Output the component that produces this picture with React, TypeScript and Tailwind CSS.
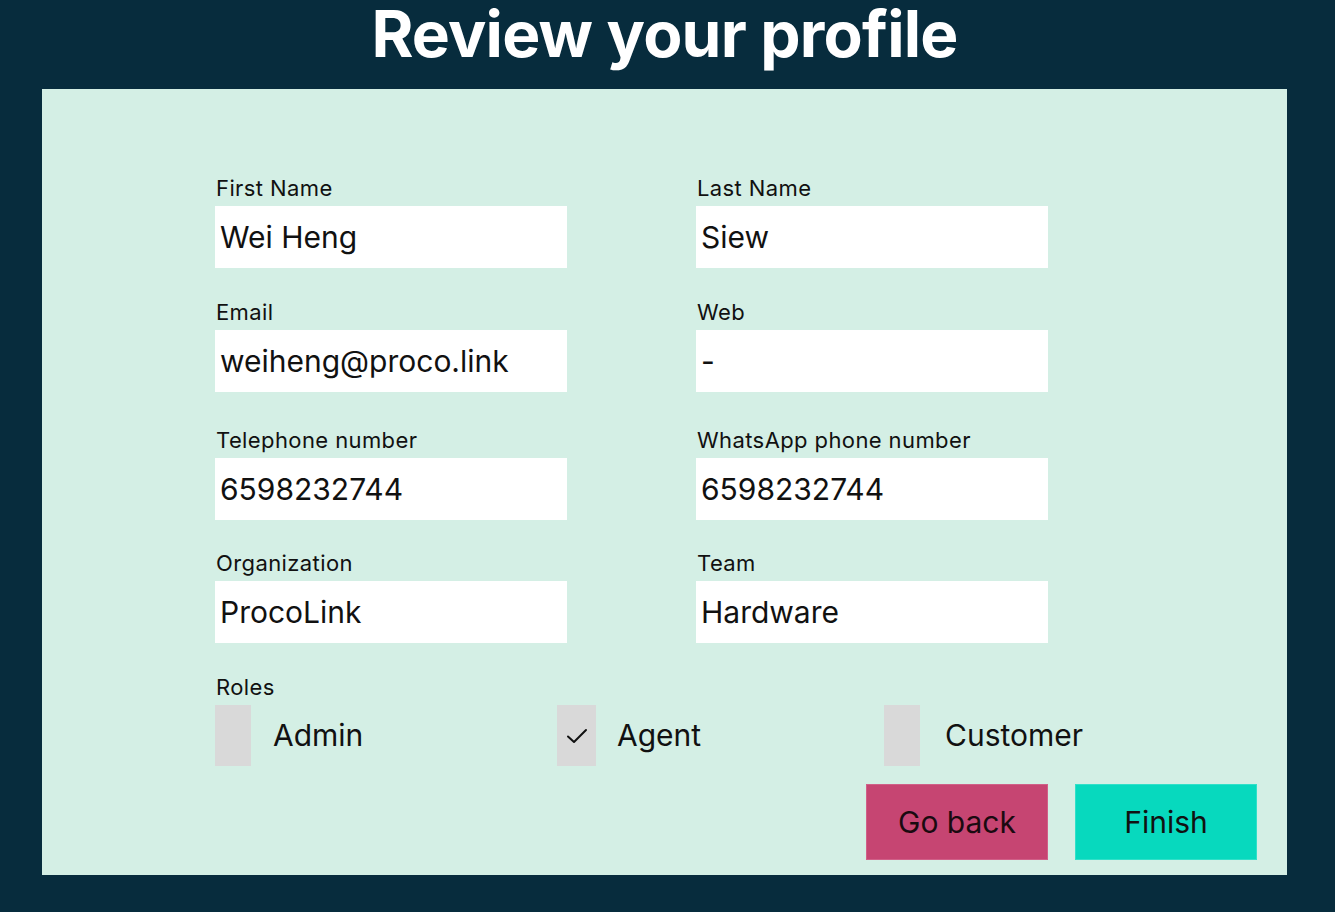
const ROWS = [
  { gap: 'mt-0', left: { label: 'First Name', value: 'Wei Heng' }, right: { label: 'Last Name', value: 'Siew' } },
  { gap: 'mt-[32px]', left: { label: 'Email', value: 'weiheng@proco.link' }, right: { label: 'Web', value: '-' } },
  { gap: 'mt-[36px]', left: { label: 'Telephone number', value: '6598232744' }, right: { label: 'WhatsApp phone number', value: '6598232744' } },
  { gap: 'mt-[31px]', left: { label: 'Organization', value: 'ProcoLink' }, right: { label: 'Team', value: 'Hardware' } },
]

function Field({ label, value }: { label: string; value: string }) {
  return (
    <div className="w-[352px]">
      <div className="text-[22px] leading-[24px] tracking-[0.4px] text-[#111] pl-px mb-[6px]">{label}</div>
      <div className="h-[62px] bg-white flex items-center pl-[5px] text-[30px] text-[#111]">{value}</div>
    </div>
  )
}

export default function App() {
  return (
    <div className="min-h-[912px] bg-[#072c3d] pb-[37px]" style={{ fontFamily: 'Inter, "Noto Sans", sans-serif' }}>
      <h1 className="pt-[2px] pr-[6px] text-center text-white text-[64px] leading-[64px] font-bold tracking-[-0.8px] mb-[23px]">
        Review your profile
      </h1>

      <div className="ml-[42px] mr-[48px] h-[786px] bg-[#d4efe5] pt-[87px] pl-[173px] pr-[30px] flex flex-col">
        {ROWS.map(r => (
          <div key={r.left.label} className={`flex gap-[129px] ${r.gap}`}>
            <Field {...r.left} />
            <Field {...r.right} />
          </div>
        ))}

        {/* Roles */}
        <div className="mt-[32px] text-[22px] leading-[24px] tracking-[0.4px] text-[#111] pl-px mb-[6px]">Roles</div>
        <div className="flex items-center">
          <div className="w-[342px] flex items-center">
            <div className="w-[36px] h-[61px] bg-[#d9d9d9]" />
            <span className="ml-[22px] text-[30px] text-[#111]">Admin</span>
          </div>
          <div className="w-[327px] flex items-center">
            <div className="w-[39px] h-[61px] bg-[#d9d9d9] flex items-center justify-center">
              <svg width="22" height="16" viewBox="0 0 22 16" fill="none">
                <path d="M2 8.5 L8 14 L20 2" stroke="#111" strokeWidth="2" strokeLinecap="round" strokeLinejoin="round" />
              </svg>
            </div>
            <span className="ml-[21px] text-[30px] text-[#111]">Agent</span>
          </div>
          <div className="flex items-center">
            <div className="w-[36px] h-[61px] bg-[#d9d9d9]" />
            <span className="ml-[25px] text-[30px] text-[#111]">Customer</span>
          </div>
        </div>

        {/* Actions */}
        <div className="mt-[18px] flex justify-end gap-[27px]">
          <button className="w-[182px] h-[76px] bg-[#c64572] border border-[#d06088] text-[30px] text-[#1a0a10]">
            Go back
          </button>
          <button className="w-[182px] h-[76px] bg-[#07d9be] border border-[#30e0c9] text-[30px] text-[#111]">
            Finish
          </button>
        </div>
      </div>
    </div>
  )
}
